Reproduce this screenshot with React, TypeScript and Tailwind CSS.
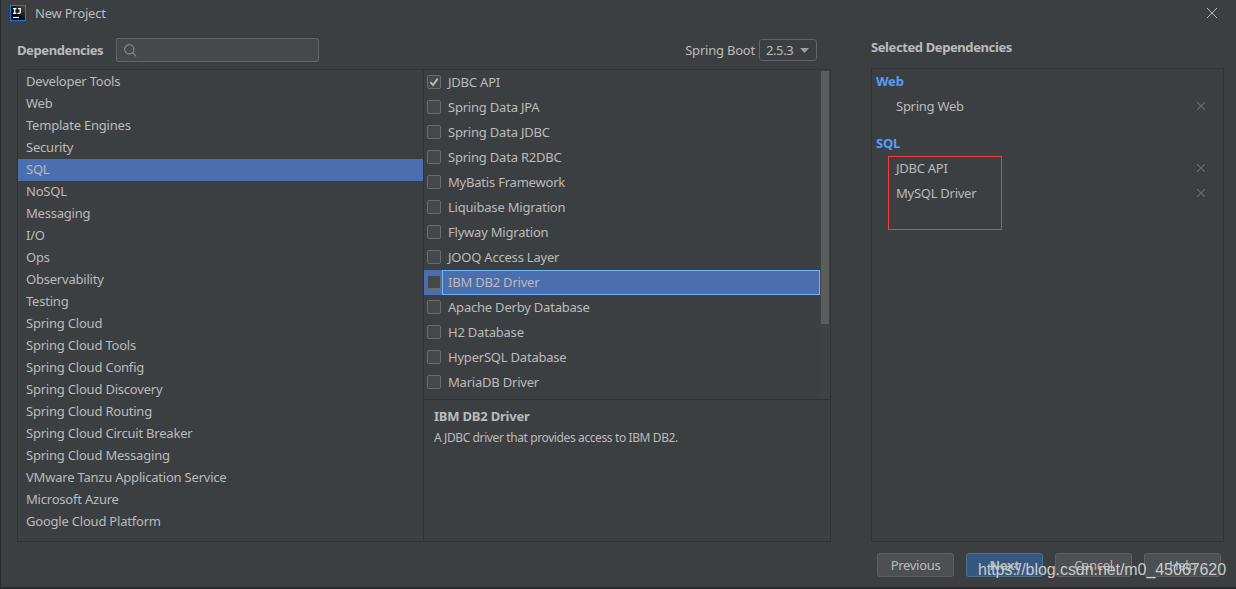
import clsx from "clsx";

const categories = [
  "Developer Tools",
  "Web",
  "Template Engines",
  "Security",
  "SQL",
  "NoSQL",
  "Messaging",
  "I/O",
  "Ops",
  "Observability",
  "Testing",
  "Spring Cloud",
  "Spring Cloud Tools",
  "Spring Cloud Config",
  "Spring Cloud Discovery",
  "Spring Cloud Routing",
  "Spring Cloud Circuit Breaker",
  "Spring Cloud Messaging",
  "VMware Tanzu Application Service",
  "Microsoft Azure",
  "Google Cloud Platform",
];

const drivers = [
  "JDBC API",
  "Spring Data JPA",
  "Spring Data JDBC",
  "Spring Data R2DBC",
  "MyBatis Framework",
  "Liquibase Migration",
  "Flyway Migration",
  "JOOQ Access Layer",
  "IBM DB2 Driver",
  "Apache Derby Database",
  "H2 Database",
  "HyperSQL Database",
  "MariaDB Driver",
];

const Logo = () => (
  <svg width="16" height="16" viewBox="0 0 16 16">
    <defs>
      <linearGradient id="logo-bg" x1="1" y1="0" x2="0.3" y2="0.7">
        <stop offset="0" stopColor="#4a4a4a" />
        <stop offset="1" stopColor="#000" />
      </linearGradient>
    </defs>
    <rect width="16" height="16" fill="#087cfa" />
    <rect x="1" y="1" width="14" height="14" fill="url(#logo-bg)" />
    <path d="M3 3.6h3.4M4.7 3v6M3 8.4h3.4M8 3.6h2.9M10.2 3v4.2q0 1.2-1.2 1.2H7.4" fill="none" stroke="#fff" strokeWidth="1.3" />
    <path d="M3 12.5h6" stroke="#fff" strokeWidth="1.2" />
  </svg>
);

const Checkbox = ({ checked }: { checked?: boolean }) => (
  <span className="mb-0.5 flex h-3.5 w-3.5 shrink-0 items-center justify-center rounded-[2px] border border-[#6b6b6b] bg-[#43494a]">
    {checked && (
      <svg width="10" height="10" viewBox="0 0 10 10">
        <path d="M1.3 5.2L4 8L8.7 1.6" fill="none" stroke="#bbbbbb" strokeWidth="1.9" />
      </svg>
    )}
  </span>
);

const RemoveIcon = () => (
  <svg width="8" height="8" viewBox="0 0 8 8" className="mb-px">
    <path d="M0 0L8 8M8 0L0 8" stroke="#6b6e70" strokeWidth="1.1" />
  </svg>
);

const SelectedRow = ({ name }: { name: string }) => (
  <div className="flex h-[25px] items-center justify-between pr-[18px] pl-5">
    <span className="tracking-[-0.26px]">{name}</span>
    <RemoveIcon />
  </div>
);

const DialogButton = ({ label, primary }: { label: string; primary?: boolean }) => (
  <button
    className={clsx(
      "h-6 w-[77px] rounded-[3px] border pt-px leading-none tracking-[-0.3px]",
      primary ? "border-[#4c708c] bg-[#365880] font-bold" : "border-[#5e6060] bg-[#4c5052]",
    )}
  >
    {label}
  </button>
);

const App = () => {
  return (
    <div className="relative flex h-[589px] w-[1236px] flex-col overflow-hidden border-b-2 border-l border-[#2b2b2b] bg-[#3c3f41] font-['Noto_Sans',sans-serif] text-[13px] leading-none tracking-[-0.21px] whitespace-nowrap text-[#bbbbbb]">
      {/* Title bar */}
      <div className="flex h-[26px] shrink-0 items-center pr-[19px] pl-[9px]">
        <Logo />
        <span className="ml-[9px] pt-px">New Project</span>
        <svg width="10" height="10" viewBox="0 0 10 10" className="ml-auto">
          <path d="M0 0L10 10M10 0L0 10" stroke="#bbbbbb" strokeWidth="1" />
        </svg>
      </div>

      <div className="flex">
        <div className="ml-4 w-[814px]">
          {/* Search and version */}
          <div className="flex h-[43px] items-center pt-[5px]">
            <span className="w-[99px] font-bold tracking-[-0.4px]">Dependencies</span>
            <div className="flex h-6 w-[203px] items-center rounded-[2px] border border-[#646464] bg-[#45494a] pl-[7px]">
              <svg width="13" height="13" viewBox="0 0 13 13" fill="none" stroke="#7f8b91" strokeWidth="1.2">
                <circle cx="5.3" cy="5.3" r="4.6" />
                <path d="M8.6 8.6L12.3 12.3" />
              </svg>
            </div>
            <span className="ml-auto">Spring Boot</span>
            <div className="mr-[14px] ml-1 flex h-[22px] w-[58px] items-center justify-between rounded-[3px] border border-[#646464] pr-[7px] pl-1.5">
              <span className="tracking-[-0.4px]">2.5.3</span>
              <svg width="9" height="5" viewBox="0 0 9 5">
                <path d="M0 0h9L4.5 5z" fill="#9da0a2" />
              </svg>
            </div>
          </div>

          <div className="flex h-[473px] border border-[#323232]">
            <ul className="w-[405px] pt-px">
              {categories.map((name) => (
                <li key={name} className={clsx("flex h-[22px] items-center pb-0.5 pl-2", name === "SQL" && "bg-[#4b6eaf]")}>
                  {name}
                </li>
              ))}
            </ul>

            <div className="flex flex-1 flex-col border-l border-[#323232]">
              <div className="flex h-[329px]">
                <ul className="w-[396px]">
                  {drivers.map((name) => {
                    const active = name === "IBM DB2 Driver";
                    return (
                      <li key={name} className={clsx("flex h-[25px] items-center pl-[3px]", active && "bg-[#4b6eaf]")}>
                        <Checkbox checked={name === "JDBC API"} />
                        <span
                          className={clsx(
                            "ml-px flex h-full flex-1 items-center border pl-[5px]",
                            active ? "border-[#6cb5ff]" : "border-transparent",
                          )}
                        >
                          {name}
                        </span>
                      </li>
                    );
                  })}
                </ul>
                <div className="flex-1 bg-[#3f4244] pt-px pl-px">
                  <div className="h-[253px] w-2 bg-[#5a5d5e]" />
                </div>
              </div>
              <div className="flex-1 border-t border-[#323232] pt-[10px] pl-[10px]">
                <h2 className="font-bold">IBM DB2 Driver</h2>
                <p className="mt-[9px] text-[12px] tracking-[-0.39px]">A JDBC driver that provides access to IBM DB2.</p>
              </div>
            </div>
          </div>
        </div>

        {/* Selected dependencies */}
        <div className="ml-10 w-[353px]">
          <div className="flex h-[42px] items-center font-bold tracking-[-0.4px]">Selected Dependencies</div>
          <div className="relative h-[474px] border border-[#323232] pl-1">
            <h3 className="flex h-[25px] items-center font-bold text-[#589df6]">Web</h3>
            <SelectedRow name="Spring Web" />
            <h3 className="mt-3 flex h-[25px] items-center font-bold text-[#589df6]">SQL</h3>
            <SelectedRow name="JDBC API" />
            <SelectedRow name="MySQL Driver" />
            {/* Highlight over the SQL group */}
            <div className="absolute top-[87px] left-4 h-[74px] w-[114px] border border-[#f53b3b]" />
          </div>
        </div>
      </div>

      {/* Actions */}
      <div className="mt-[11px] flex justify-end gap-3 pr-[15px]">
        <DialogButton label="Previous" />
        <DialogButton label="Next" primary />
        <DialogButton label="Cancel" />
        <DialogButton label="Help" />
      </div>

      <span className="absolute top-[562px] left-[977px] font-['Liberation_Sans',sans-serif] text-[16px] tracking-[-0.06px] text-[#c9cbcc]">
        https://blog.csdn.net/m0_45067620
      </span>
    </div>
  );
};

export default App;
